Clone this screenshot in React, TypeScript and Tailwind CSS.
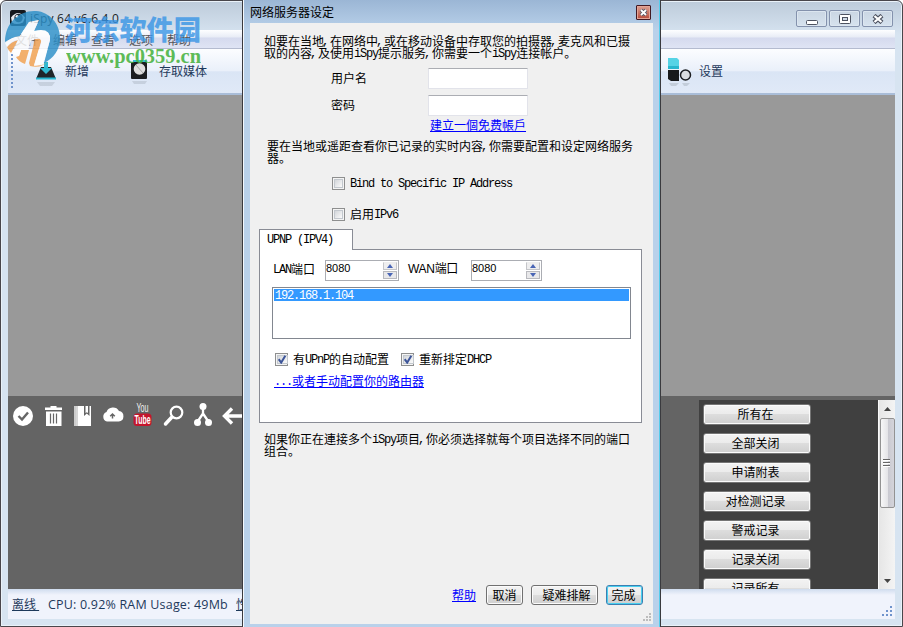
import { Fragment, type ReactNode } from 'react';

const recordButtons = ['所有在', '全部关闭', '申请附表', '对检测记录', '警戒记录', '记录关闭', '记录所有'];

/* Dialog text: full-width glyphs are 12px wide, ASCII glyphs are 6px wide. */
function Txt({ children, className = '' }: { children: string; className?: string }) {
  const parts = children.split(/(,|[\x20-\x2b\x2d-\x7e]+)/);
  return (
    <span className={`whitespace-pre text-[12px] leading-[12px] font-['Noto_Sans_CJK_SC',sans-serif] ${className}`}>
      {parts.map((p, i) => {
        if (i % 2 === 0) return <Fragment key={i}>{p}</Fragment>;
        return (
          <span
            key={i}
            className={`align-[1px] font-['Liberation_Mono',monospace] text-[12px] leading-[0] tracking-[-1.2px] ${p === ',' ? 'relative -left-[2px]' : ''}`}
          >
            {p}
          </span>
        );
      })}
    </span>
  );
}

function Check({ on = false }: { on?: boolean }) {
  return (
    <span className="flex h-[13px] w-[13px] shrink-0 border border-[#8e8f8f] bg-[#f4f4f4] p-px">
      <span className="flex flex-1 border border-[#c3c8ce] bg-linear-to-br from-[#d3d6da] to-[#fbfbfb]">
        {on && (
          <svg viewBox="0 0 9 9" className="-mt-px h-[9px] w-[9px]">
            <path d="M0.700 4.200 3.200 7.600 7.300 0.800" fill="none" stroke="#3d5599" strokeWidth="2" />
          </svg>
        )}
      </span>
    </span>
  );
}

function Spinner({ className }: { className: string }) {
  return (
    <div className={`flex h-[21px] border border-[#abadb3] bg-white pr-px ${className}`}>
      <span className="flex-1 font-['Liberation_Sans',sans-serif] text-[11px] leading-[14px]">8080</span>
      <span className="flex w-[14px] flex-col gap-px py-px">
        <span className="flex h-[8px] items-center justify-center border border-[#c4c5c9] border-t-[#eee] bg-[#eeeeef]">
          <svg viewBox="0 0 6 4" className="h-[4px] w-[6px]"><path d="M0 4 3 0 6 4Z" fill="#4965b5" /></svg>
        </span>
        <span className="flex h-[8px] items-center justify-center border border-[#b8b9be] bg-[#e8e8ea]">
          <svg viewBox="0 0 6 4" className="h-[4px] w-[6px]"><path d="M0 0 3 4 6 0Z" fill="#4965b5" /></svg>
        </span>
      </span>
    </div>
  );
}

function Btn({ children, className }: { children: string; className: string }) {
  return (
    <button
      className={`flex shrink-0 items-center justify-center rounded-[3px] border bg-[linear-gradient(#f3f3f3_0%,#ebebeb_49%,#dddddd_50%,#cfcfcf_100%)] shadow-[inset_0_0_0_1px_#fbfbfb] ${className}`}
    >
      <Txt>{children}</Txt>
    </button>
  );
}

function WinButton({ children }: { children: ReactNode }) {
  return (
    <span className="flex h-[17px] w-[31px] items-center justify-center rounded-[2px] border border-[#8492ad] bg-linear-to-b from-[#cad6e3] to-[#d6e2ee] shadow-[inset_0_0_0_1px_#dce6f0]">
      {children}
    </span>
  );
}

function Toolbar() {
  return (
    <div className="flex h-[46px] border-b-2 border-[#a9bdd8] bg-[linear-gradient(#fcfdff_0%,#eaf0fa_49%,#dae5f5_52%,#e0e9f7_100%)]">
      <svg viewBox="0 0 2 36" className="mt-[5px] ml-[3px] h-[36px] w-[2px]">
        <path d="M1 0V36" stroke="#6f93cc" strokeWidth="2" strokeDasharray="2 2" />
      </svg>
      <svg viewBox="0 0 24 30" className="mt-[11px] ml-[21px] h-[30px] w-[24px]">
        <path d="M7 7h10l5 12H2Z" fill="#20252a" />
        <path d="M10 2h4v6h4l-6 6-6-6h4Z" fill="#31b9d2" />
        <path d="M2 17.500h20v2H2Z" fill="#27b5cf" />
        <path d="M3 22h18l-3 4H6Z" fill="#b8c2cf" opacity=".6" />
      </svg>
      <span className="mt-[12px] ml-[7px] w-[66px] font-['Noto_Sans_CJK_SC',sans-serif] text-[12px] leading-[20px] text-[#1e395b]">新增</span>
      <svg viewBox="0 0 22 26" className="mt-[11px] h-[26px] w-[22px]">
        <path d="M2 0h14v3H2Z" fill="#35c0d8" />
        <rect y="2" width="16" height="17" rx="1" fill="#1c1e20" />
        <circle cx="8.500" cy="9" r="5.800" fill="#dedede" />
        <path d="m5 5 7 8" stroke="#aaa" />
        <path d="M1 21h15l-2 3H3Z" fill="#b8c2cf" opacity=".6" />
      </svg>
      <span className="mt-[12px] ml-[6px] w-[508px] font-['Noto_Sans_CJK_SC',sans-serif] text-[12px] leading-[20px] text-[#1e395b]">存取媒体</span>
      <svg viewBox="0 0 24 30" className="mt-[9px] ml-px h-[30px] w-[24px]">
        <path d="M0 0h9l2 2v9H0Z" fill="#55d3e5" />
        <path d="M0 8h11v3H0Z" fill="#28b6cd" />
        <path d="M0 12h11v11H3l-3-2Z" fill="#17191b" />
        <circle cx="17.500" cy="17" r="5" fill="#d9dce0" stroke="#1b1d20" strokeWidth="1.500" />
        <path d="M1 25h10l-3 3H3ZM14 25h8l-3 3h-3Z" fill="#b8c2cf" opacity=".7" />
      </svg>
      <span className="mt-[12px] ml-[7px] font-['Noto_Sans_CJK_SC',sans-serif] text-[12px] leading-[20px] text-[#1e395b]">设置</span>
    </div>
  );
}

function MediaIcons() {
  return (
    <div className="flex h-[40px] w-[240px] shrink-0 overflow-hidden text-white">
      <svg viewBox="0 0 240 40" className="h-[40px] w-[240px] shrink-0">
        <circle cx="15" cy="20" r="10" fill="#fff" />
        <path d="m10.500 20 3.500 3.500 6-7" fill="none" stroke="#666" strokeWidth="2.400" />
        <path d="M37 11.500h5.500v-1.500h6v1.500H54v2.500H37ZM38 15.500h15.500v14.500H38Z" fill="#fff" />
        <path d="M42.500 17.500v10M45.500 17.500v10M48.500 17.500v10" stroke="#666" strokeWidth="1.200" />
        <path d="M66 10h17v20H66Z" fill="#fff" />
        <path d="M67 10v20" stroke="#ccc" strokeWidth="2" />
        <path d="M69 10v20" stroke="#999" strokeWidth=".8" />
        <path d="M76 10h5.500v10l-2.700-2.500-2.800 2.500Z" fill="#646464" />
        <path d="M77.500 10h2.500v7l-1.200-.8-1.300.8Z" fill="#fff" />
        <path d="M99 25.500a5 5 0 0 1-.5-9.500 7 7 0 0 1 12.500-1 5.300 5.300 0 0 1-.3 10.500Z" fill="#fff" />
        <path d="M104.500 22.500v-4M102.200 20.300l2.300-2.300 2.300 2.300" stroke="#666" strokeWidth="1.500" fill="none" />
        <rect x="125.500" y="17.500" width="18" height="12.500" rx="3.500" fill="#c4152c" />
        <text x="134.500" y="15.500" textAnchor="middle" textLength="12" lengthAdjust="spacingAndGlyphs" fontSize="12" fontFamily="Liberation Sans Narrow, Liberation Sans, sans-serif" fill="#f2f2f2">You</text>
        <text x="134.500" y="28" textAnchor="middle" textLength="16" lengthAdjust="spacingAndGlyphs" fontSize="12" fontWeight="700" fontFamily="Liberation Sans Narrow, Liberation Sans, sans-serif" fill="#fff">Tube</text>
        <circle cx="168.500" cy="16.500" r="5.800" fill="none" stroke="#fff" strokeWidth="2.200" />
        <path d="m163.500 21.500-6 6.500" stroke="#fff" strokeWidth="3.500" strokeLinecap="round" />
        <path d="M195 11v9M195 17.500l-6 9M195 17.500l6 9" stroke="#fff" strokeWidth="2.300" fill="none" />
        <circle cx="195" cy="10.500" r="3.500" fill="#fff" />
        <circle cx="189.500" cy="26.500" r="3.500" fill="#fff" />
        <circle cx="200.500" cy="26.500" r="3.500" fill="#fff" />
        <path d="M236 20h-18M224 12.500 216.500 20l7.500 7.500" stroke="#fff" strokeWidth="3.400" fill="none" />
      </svg>
    </div>
  );
}

function MainWindow() {
  return (
    <div className="flex h-[627px] w-[903px] flex-col overflow-hidden rounded-t-[6px] border border-[#49464b] bg-[#d7e4f1] bg-[linear-gradient(#bdcbda_0px,#d7e4f1_34px)] px-[7px] shadow-[inset_0_0_0_1px_#eaf2f9]">
      <div className="flex h-[29px] shrink-0">
        <svg viewBox="0 0 16 16" className="mt-[9px] ml-[2px] h-[16px] w-[16px]">
          <rect width="16" height="16" rx="2" fill="#15181d" />
          <path d="M1 7.500q7-9 14 0l-2 5q-7 3-11 0Z" fill="#e5e8ed" />
          <circle cx="8.500" cy="8" r="4.200" fill="#222b36" />
          <circle cx="7" cy="6.500" r="1.500" fill="#fff" />
        </svg>
        <span className="mt-[9px] ml-[4px] flex-1 font-['Open_Sans',sans-serif] text-[12px] leading-[18px] tracking-[0.2px] text-[#1b1f27]">iSpy 64 v6.6.4.0</span>
        <div className="mt-[9px] mr-[2px] flex gap-[2px]">
          <WinButton>
            <svg viewBox="0 0 12 12" className="h-[12px] w-[12px]"><rect x=".500" y="7.500" width="11" height="4" rx="1" fill="#fff" stroke="#4d5260" /></svg>
          </WinButton>
          <WinButton>
            <svg viewBox="0 0 12 10" className="h-[10px] w-[12px]"><rect x=".500" y=".500" width="11" height="9" rx="1" fill="#fff" stroke="#4d5260" /><rect x="3.500" y="3.500" width="5" height="3" fill="#cfdae6" stroke="#4d5260" /></svg>
          </WinButton>
          <WinButton>
            <svg viewBox="0 0 12 10" className="h-[10px] w-[12px]"><path d="m2 1.500 8 7M10 1.500l-8 7" stroke="#4d5260" strokeWidth="4.400" /><path d="m2.500 2 7 6M9.500 2l-7 6" stroke="#fff" strokeWidth="2.300" /></svg>
          </WinButton>
        </div>
      </div>
      <div className="flex h-[19px] shrink-0 gap-[14px] border-b border-[#b4bbcf] bg-[linear-gradient(#fdfeff_0px,#e8ecf6_7px,#d5daee_8px,#dfe4f4_18px)] pl-[7px] font-['Noto_Sans_CJK_SC',sans-serif] text-[12px] leading-[19px] text-[#555558]">
        <span>文件</span><span>编辑</span><span>查看</span><span>选项</span><span>帮助</span>
      </div>
      <Toolbar />
      <div className="h-[301px] shrink-0 bg-[#999999]" />
      <div className="flex h-[193px] shrink-0 bg-[#646464]">
        <MediaIcons />
        <div className="flex-1" />
        <div className="mt-[4px] flex w-[196px] overflow-hidden bg-[#404040]">
          <div className="flex flex-1 flex-col gap-[8px] pt-[4px] pl-[4px]">
            {recordButtons.map((b) => (
              <Btn key={b} className="h-[21px] w-[108px] border-[#757575] pr-[3px] pb-[2px]">{b}</Btn>
            ))}
          </div>
          <div className="flex w-[17px] flex-col items-center border-l border-[#fafafa] bg-linear-to-r from-[#e6e6e6] to-[#f4f4f4]">
            <svg viewBox="0 0 7 4" className="mt-[7px] h-[4px] w-[7px]"><path d="M0 4 3.500 0 7 4Z" fill="#444" /></svg>
            <div className="mt-[7px] flex h-[90px] w-[15px] flex-col items-center justify-center gap-px rounded-[2px] border border-[#929292] bg-[linear-gradient(90deg,#f7f7f7,#e5e5e8_50%,#c9c9d0_55%,#d4d4da)] pr-px">
              <span className="h-[2px] w-[7px] border-b border-white bg-[#666]" />
              <span className="h-[2px] w-[7px] border-b border-white bg-[#666]" />
              <span className="h-[2px] w-[7px] border-b border-white bg-[#666]" />
            </div>
            <svg viewBox="0 0 7 4" className="mt-[71px] h-[4px] w-[7px]"><path d="M0 0 3.500 4 7 0Z" fill="#444" /></svg>
          </div>
        </div>
      </div>
      <div className="flex h-[30px] shrink-0 bg-[linear-gradient(#cfdcee_0px,#f0f3fc_6px)] pt-[6px] pl-[4px] font-['Open_Sans','Noto_Sans_CJK_SC',sans-serif] text-[12px] leading-[20px] text-[#1e395b]">
        <span className="w-[36px] shrink-0 whitespace-pre underline">离线 </span>
        <span className="w-[188px] shrink-0 text-[12.5px] tracking-[0.19px]">CPU: 0.92% RAM Usage: 49Mb</span>
        <span className="underline">性能</span>
        <span className="flex-1" />
        <svg viewBox="0 0 10 10" className="mt-[11px] mr-[3px] h-[10px] w-[10px]">
          <path d="M8 0h2v2H8ZM8 4h2v2H8ZM4 4h2v2H4ZM8 8h2v2H8ZM4 8h2v2H4ZM0 8h2v2H0Z" fill="#6f93cc" />
        </svg>
      </div>
    </div>
  );
}

function Dialog() {
  return (
    <div className="absolute top-0 left-[242px] flex h-[627px] w-[419px] flex-col border-x border-[#3a3a3e] bg-[#b9d1ea] bg-[linear-gradient(#9bb6d5_0px,#b9d1ea_30px)] text-black">
      <div className="flex flex-1 flex-col border-r border-l border-r-[#56cdec] border-l-[#f4f8fc] px-[6px]">
        <div className="flex h-[23px] shrink-0">
          <span className="mt-[3px] flex-1 font-['Noto_Sans_CJK_SC',sans-serif] text-[12px] leading-[18px]">网络服务器设定</span>
          <span className="mt-[5px] mr-[2px] flex h-[15px] w-[15px] items-center justify-center rounded-[1px] border border-[#431922] bg-linear-to-b from-[#dba194] to-[#b74a3a] shadow-[inset_0_0_0_1px_#e3a496]">
            <svg viewBox="0 0 9 9" className="h-[9px] w-[9px]"><path d="m2 2 5 5M7 2 2 7" stroke="#535666" strokeWidth="3.600" /><path d="m2 2 5 5M7 2 2 7" stroke="#fff" strokeWidth="1.800" /></svg>
          </span>
        </div>
        <div className="flex h-[601px] shrink-0 flex-col bg-[#f0f0f0]">
          <div className="flex h-[45px] shrink-0 flex-col pt-[12px] pl-[14px]">
            <Txt className="h-[12px]">如要在当地,在网络中,或在移动设备中存取您的拍摄器,麦克风和已摄</Txt>
            <Txt className="h-[12px]">取的内容,及使用iSpy提示服务,你需要一个iSpy连接帐户。</Txt>
          </div>
          <div className="flex h-[27px] shrink-0 pl-[81px]">
            <Txt className="mt-[4px] w-[97px]">用户名</Txt>
            <span className="h-[21px] w-[100px] rounded-[1px] border border-[#e2e3ea] border-t-[#abadb3] bg-white" />
          </div>
          <div className="flex h-[24px] shrink-0 pl-[81px]">
            <Txt className="mt-[4px] w-[97px]">密码</Txt>
            <span className="h-[21px] w-[100px] rounded-[1px] border border-[#e2e3ea] border-t-[#abadb3] bg-white" />
          </div>
          <div className="flex h-[21px] shrink-0 pl-[180px]">
            <Txt className="text-[#0000ff] underline">建立一個免费帳戶</Txt>
          </div>
          <div className="flex h-[37px] shrink-0 flex-col pl-[17px]">
            <Txt className="h-[12px]">要在当地或遥距查看你已记录的实时内容,你需要配置和设定网络服务</Txt>
            <Txt className="h-[12px]">器。</Txt>
          </div>
          <div className="flex h-[31px] shrink-0 gap-[5px] pl-[82px]">
            <Check /><Txt>Bind to Specific IP Address</Txt>
          </div>
          <div className="flex h-[21px] shrink-0 gap-[5px] pl-[82px]">
            <Check /><Txt>启用IPv6</Txt>
          </div>
          <div className="z-10 ml-[9px] flex h-[21px] w-[94px] shrink-0 border border-b-0 border-[#898c95] bg-white pt-[3px] pl-[7px]">
            <Txt>UPNP (IPV4)</Txt>
          </div>
          <div className="-mt-px ml-[9px] flex h-[174px] w-[383px] shrink-0 flex-col border border-[#898c95] bg-white pl-[12px]">
            <div className="flex h-[37px] shrink-0 pt-[10px]">
              <Txt className="mt-[3px] ml-px w-[52px]">LAN端口</Txt>
              <Spinner className="w-[74px]" />
              <span className="mt-[3px] ml-[9px] w-[63px] font-['Liberation_Sans','Noto_Sans_CJK_SC',sans-serif] text-[12px] leading-[13px] tracking-[-0.3px]">WAN端口</span>
              <Spinner className="w-[71px]" />
            </div>
            <div className="flex h-[52px] w-[359px] shrink-0 flex-col border border-[#828790] bg-white p-px">
              <Txt className="h-[12px] bg-[#3399ff] pl-px text-white">192.168.1.104</Txt>
            </div>
            <div className="mt-[14px] flex h-[22px] shrink-0 pl-[3px]">
              <Check on /><Txt className="ml-[5px] w-[108px]">有UPnP的自动配置</Txt>
              <Check on /><Txt className="ml-[5px]">重新排定DHCP</Txt>
            </div>
            <div className="flex pl-[2px]">
              <Txt className="text-[#0000ff] underline">...或者手动配置你的路由器</Txt>
            </div>
          </div>
          <div className="mt-[10px] flex h-[152px] shrink-0 flex-col pl-[14px]">
            <Txt className="h-[12px]">如果你正在連接多个iSpy项目,你必须选择就每个项目选择不同的端口</Txt>
            <Txt className="h-[12px]">组合。</Txt>
          </div>
          <div className="flex h-[28px] shrink-0 pl-[202px]">
            <Txt className="mt-[4px] mr-[10px] text-[#0000ff] underline">帮助</Txt>
            <Btn className="mr-[8px] h-[20px] w-[37px] border-[#707070]">取消</Btn>
            <Btn className="mr-[8px] h-[20px] w-[67px] border-[#707070] pl-[4px]">疑难排解</Btn>
            <Btn className="h-[20px] w-[37px] border-[#3c7fb1] pr-[2px] ring-1 ring-[#48d0f0] ring-inset">完成</Btn>
          </div>
          <svg viewBox="0 0 9 9" className="ml-[393px] h-[9px] w-[9px] shrink-0">
            <path d="M6 0h2v2H6ZM6 3h2v2H6ZM3 3h2v2H3ZM6 6h2v2H6ZM3 6h2v2H3ZM0 6h2v2H0Z" fill="#bcbcbc" />
          </svg>
        </div>
      </div>
    </div>
  );
}

function Watermark() {
  return (
    <svg viewBox="0 0 210 80" className="absolute top-0 left-0 h-[80px] w-[210px]">
      <g opacity=".82">
        <path d="M5 42C5 22 20 10 36 11 50 12 60 24 60 38 60 50 53 59 44 63L50 40Q51 31 41 31H34L39 20 29 22 19 37Q11 38 5 42Z" fill="#2b8fc8" />
        <path d="M7 47Q11 42 18 40L11 53Q8 50 7 47ZM21 50H29L25 64Q19 62 16 57L19 56ZM35 39Q42 37 41 42L34 65Q42 67 48 61 41 69 30 66L29 63Z" fill="#f2a04d" />
        <path d="M29 22 39 20 34 31Q51 27 50 40L43 64 34 66 41 43Q42 37 35 39L31 41 28 50H21L19 56 12 54 18 40Q11 41 7 47L5 43Q11 37 20 36Z" fill="#fff" />
      </g>
      <text x="65" y="40" textLength="136" lengthAdjust="spacingAndGlyphs" fontSize="27" fontWeight="900" fontFamily="Noto Sans CJK SC, sans-serif" fill="#3895e5" opacity=".8">河东软件园</text>
      <text x="66" y="63" textLength="135" lengthAdjust="spacingAndGlyphs" fontSize="20" fontWeight="700" fontFamily="Liberation Serif, serif" fill="#48b341" opacity=".88">www.pc0359.cn</text>
    </svg>
  );
}

export default function App() {
  return (
    <div className="relative h-[627px] w-[903px] overflow-hidden bg-white">
      <MainWindow />
      <Dialog />
      <Watermark />
    </div>
  );
}
